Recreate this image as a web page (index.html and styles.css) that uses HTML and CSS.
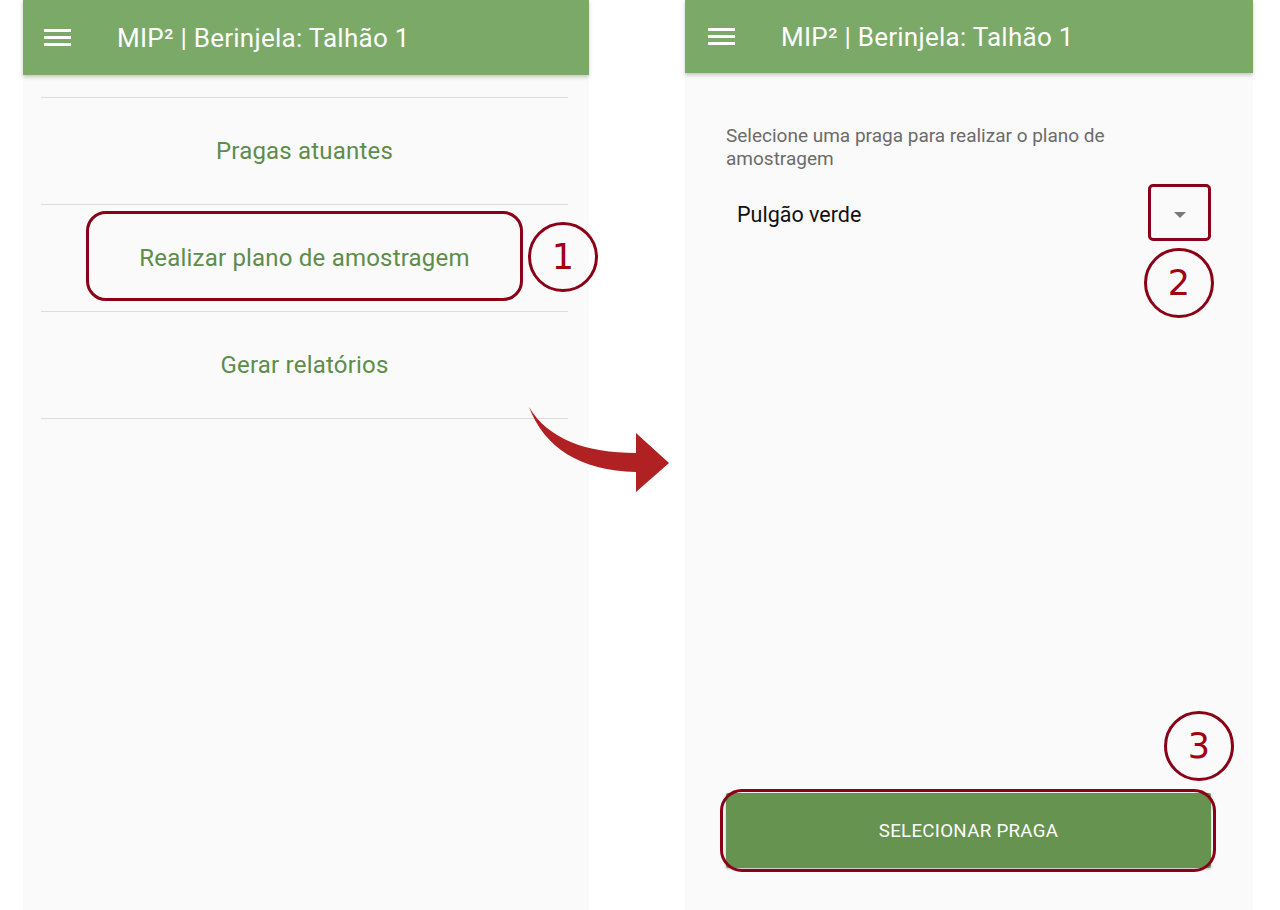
FILE: index.html
```html
<!DOCTYPE html>
<html lang="pt">
<head>
<meta charset="utf-8">
<title>MIP² | Berinjela</title>
<link rel="stylesheet" href="styles.css">
</head>
<body>
<div class="page">
  <section class="phone phone-left">
    <header class="appbar appbar-left">
      <span class="burger"><i></i><i></i><i></i></span>
      <h1 class="title">MIP² | Berinjela: Talhão 1</h1>
    </header>
    <ul class="menu">
      <li class="menu-item">Pragas atuantes</li>
      <li class="menu-item menu-item-marked">
        Realizar plano de amostragem
        <span class="mark-box mark-box-menu"></span>
        <span class="step step-1">1</span>
      </li>
      <li class="menu-item">Gerar relatórios</li>
    </ul>
  </section>

  <section class="phone phone-right">
    <header class="appbar appbar-right">
      <span class="burger"><i></i><i></i><i></i></span>
      <h1 class="title">MIP² | Berinjela: Talhão 1</h1>
    </header>
    <div class="content">
      <p class="label">Selecione uma praga para realizar o plano de amostragem</p>
      <div class="spinner">
        <span class="spinner-value">Pulgão verde</span>
        <span class="spinner-arrow">
          <span class="triangle"></span>
          <span class="mark-box mark-box-arrow"></span>
          <span class="step step-2">2</span>
        </span>
      </div>
      <div class="action">
        <button class="btn">SELECIONAR PRAGA</button>
        <span class="mark-box mark-box-btn"></span>
        <span class="step step-3">3</span>
      </div>
    </div>
  </section>

  <svg class="flow-arrow" width="160" height="110" viewBox="0 0 160 110" aria-hidden="true">
    <path d="M9 12 C 28 44, 66 58, 116 58 L 116 38 L 149 68 L 116 97 L 116 77 C 60 76, 24 52, 9 12 Z" fill="#b02124"/>
  </svg>
</div>
</body>
</html>
```
FILE: styles.css
```css
* { box-sizing: border-box; }
html, body { margin: 0; padding: 0; }
body {
  background: #ffffff;
  font-family: Roboto, "Noto Sans", "Liberation Sans", sans-serif;
}
.page {
  position: relative;
  width: 1280px;
  height: 910px;
  display: flex;
  gap: 96px;
  padding-left: 23px;
}
.phone {
  position: relative;
  height: 910px;
  background: #fafafa;
  display: flex;
  flex-direction: column;
}
.phone-left { width: 566px; }
.phone-right { width: 568px; }

.appbar {
  display: flex;
  align-items: center;
  background: #7ba968;
  color: #ffffff;
  box-shadow: 0 2px 4px rgba(0,0,0,0.22);
  position: relative;
  z-index: 1;
  flex: none;
}
.appbar-left { height: 75px; padding-left: 21px; }
.appbar-right { height: 73px; padding-left: 23px; }
.burger {
  width: 27px;
  display: flex;
  flex-direction: column;
  gap: 4px;
  margin-right: 46px;
}
.burger i {
  display: block;
  height: 3px;
  background: #ffffff;
}
.title {
  margin: 0;
  font-size: 26px;
  font-weight: 400;
  letter-spacing: 0.25px;
}

.menu {
  list-style: none;
  margin: 22px 21px 0 18px;
  padding: 0;
}
.menu-item {
  position: relative;
  height: 107px;
  border-top: 1px solid #dcdcdc;
  display: flex;
  align-items: center;
  justify-content: center;
  color: #5e8c4b;
  font-size: 24px;
  letter-spacing: 0.2px;
}
.menu-item:last-child { border-bottom: 1px solid #dcdcdc; height: 108px; }

.mark-box {
  position: absolute;
  border: 3px solid #8a0016;
  pointer-events: none;
}
.mark-box-menu {
  left: 45px;
  top: 6px;
  width: 437px;
  height: 90px;
  border-radius: 20px;
}
.step {
  position: absolute;
  width: 70px;
  height: 70px;
  border: 3px solid #8a0016;
  border-radius: 50%;
  display: flex;
  align-items: center;
  justify-content: center;
  color: #a00012;
  font-family: "DejaVu Sans", "Liberation Sans", sans-serif;
  font-size: 35px;
  font-weight: 400;
  line-height: 1;
  letter-spacing: 0;
}
.step-1 { left: 487px; top: 17px; }

.content {
  flex: 1;
  display: flex;
  flex-direction: column;
  padding: 51px 42px 42px 41px;
}
.label {
  margin: 0;
  width: 400px;
  font-size: 19px;
  line-height: 23px;
  color: #6b6b6b;
}
.spinner {
  margin-top: 14px;
  height: 57px;
  display: flex;
  align-items: center;
  justify-content: space-between;
  padding-left: 11px;
}
.spinner-value {
  font-size: 21.5px;
  color: #111111;
  padding-top: 4px;
}
.spinner-arrow {
  position: relative;
  width: 63px;
  height: 57px;
  display: flex;
  align-items: center;
  justify-content: center;
}
.triangle {
  width: 0;
  height: 0;
  border-left: 6px solid transparent;
  border-right: 6px solid transparent;
  border-top: 6px solid #7a7a7a;
  margin-top: 5px;
}
.mark-box-arrow {
  inset: 0;
  border-radius: 5px;
}
.step-2 { left: -4px; top: 64px; }

.action {
  position: relative;
  margin-top: auto;
  height: 75px;
}
.btn {
  width: 100%;
  height: 75px;
  border: none;
  background: #669350;
  color: #ffffff;
  font-family: Roboto, "Noto Sans", "Liberation Sans", sans-serif;
  font-size: 18.7px;
  letter-spacing: 0.3px;
  box-shadow: 0 1px 3px rgba(0,0,0,0.25);
  border-radius: 2px;
}
.mark-box-btn {
  inset: -4px -5px -4px -6px;
  border-radius: 22px;
}
.step-3 { left: 438px; top: -82px; }

.flow-arrow {
  position: absolute;
  left: 520px;
  top: 395px;
}
```
